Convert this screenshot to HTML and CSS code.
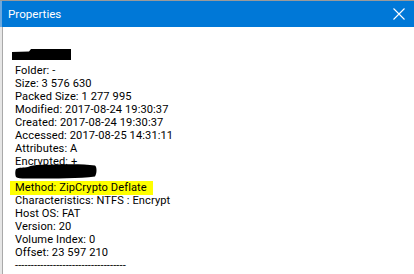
FILE: index.html
```html
<!DOCTYPE html>
<html>
<head>
<meta charset="utf-8">
<link rel="stylesheet" href="styles.css">
</head>
<body>
<div class="window">
  <div class="titlebar">
    <span class="title">Properties</span>
    <svg class="close" width="12" height="12" viewBox="0 0 12 12"><path d="M0.5 0.5 L11.5 11.5 M11.5 0.5 L0.5 11.5" stroke="#fff" stroke-width="1.1" fill="none"/></svg>
  </div>
  <div class="content">
    <div class="line redact-line">
      <svg class="redact1" width="59" height="11" viewBox="0 0 59 11"><path d="M0 3 L17 2.5 L19 0 L59 0 L59 11 L0 11 Z" fill="#000"/></svg>
    </div>
    <div class="line">Folder: -</div>
    <div class="line">Size: 3 576 630</div>
    <div class="line">Packed Size: 1 277 995</div>
    <div class="line">Modified: 2017-08-24 19:30:37</div>
    <div class="line">Created: 2017-08-24 19:30:37</div>
    <div class="line">Accessed: 2017-08-25 14:31:11</div>
    <div class="line">Attributes: A</div>
    <div class="line">Encrypted: +</div>
    <div class="line redact-line">
      <svg class="redact2" width="82" height="15" viewBox="0 0 82 15"><path d="M1 5 C4 3 9 4 13 3 C19 0 30 1 40 0.5 C55 0 70 0 80 1.5 C82 3 82 9 80 12.5 C65 14.5 40 14.5 20 14.5 C10 14.5 3 15 1 13 C0 11 0 7 1 5 Z" fill="#000"/></svg>
    </div>
    <div class="line"><span class="hl">Method: ZipCrypto Deflate</span></div>
    <div class="line">Characteristics: NTFS : Encrypt</div>
    <div class="line">Host OS: FAT</div>
    <div class="line">Version: 20</div>
    <div class="line">Volume Index: 0</div>
    <div class="line">Offset: 23 597 210</div>
    <div class="line">-----------------------------------</div>
  </div>
</div>
</body>
</html>
```
FILE: styles.css
```css
html, body {
  margin: 0;
  padding: 0;
  background: #fff;
}
.window {
  width: 414px;
  height: 274px;
  overflow: hidden;
  border-top: 1px solid #9a9a9a;
  box-sizing: border-box;
  font-family: Roboto, "Noto Sans", sans-serif;
}
.titlebar {
  height: 26px;
  background: #0078d7;
  display: flex;
  align-items: center;
  justify-content: space-between;
  padding: 0 9px 0 8px;
  border-left: 2px solid #6aa8de;
  box-sizing: border-box;
}
.title {
  color: #fff;
  font-size: 11.6px;
  margin-left: -2px;
  padding-bottom: 1px;
}
.close {
  display: block;
}
.content {
  border-left: 2px solid #e6e6e6;
  box-shadow: inset 1px 0 0 #a9a9a9;
  padding: 24px 0 0 13px;
  height: 247px;
  box-sizing: border-box;
  color: #000;
  font-size: 11.1px;
  letter-spacing: 0.1px;
}
.line {
  height: 13px;
  line-height: 13px;
  white-space: nowrap;
}
.redact-line {
  position: relative;
}
.redact1 {
  position: absolute;
  left: -3px;
  top: -2px;
}
.redact2 {
  position: absolute;
  left: 0;
  top: -4px;
}
.hl {
  display: inline-block;
  background: #ffff00;
  margin-left: -5px;
  padding: 0 6px 0 5px;
  height: 14px;
  line-height: 14px;
}
```
